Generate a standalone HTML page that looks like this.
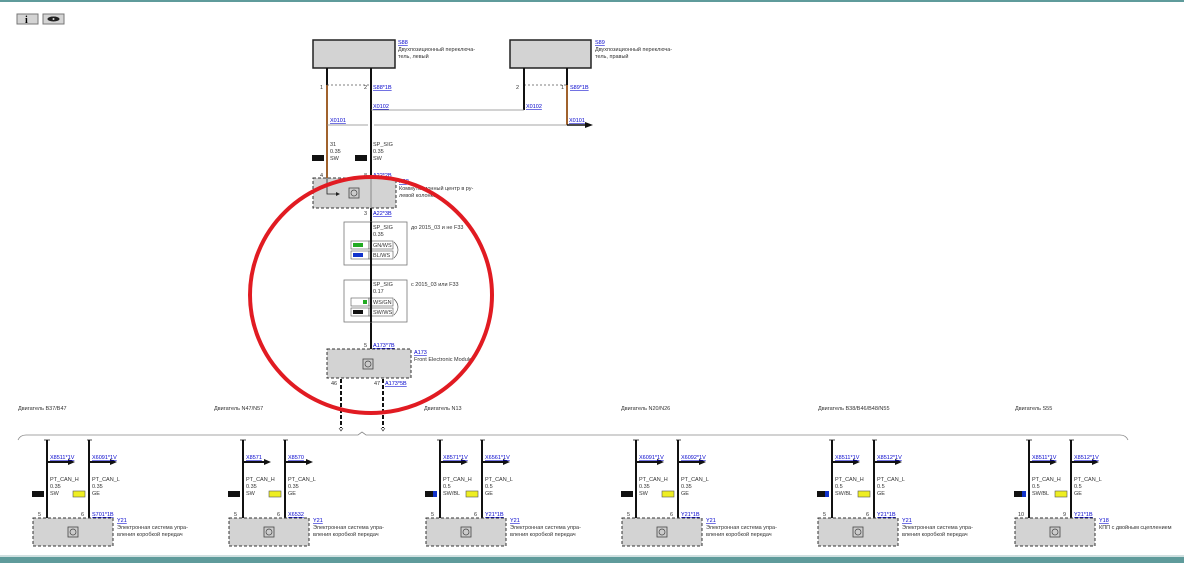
<!DOCTYPE html>
<html><head><meta charset="utf-8"><style>
html,body{margin:0;padding:0;background:#fff;}
svg{display:block;font-family:"Liberation Sans",sans-serif;}
.t{font-size:5.5px;fill:#333;}
.l{font-size:5.5px;fill:#0000cc;text-decoration:underline;}
</style></head><body>
<svg width="1184" height="563" viewBox="0 0 1184 563" xmlns="http://www.w3.org/2000/svg">
<rect x="0" y="0" width="1184" height="2" fill="#5f9b9b"/>
<rect x="0" y="557" width="1184" height="6" fill="#5f9b9b"/>
<rect x="0" y="555" width="1184" height="2" fill="#cfe0e0"/>
<!-- buttons -->
<rect x="17" y="14" width="21" height="10" fill="#d4d4d4" stroke="#777"/>
<text x="25" y="23" font-size="10" font-weight="bold" font-family="Liberation Serif">i</text>
<rect x="43" y="14" width="21" height="10" fill="#d4d4d4" stroke="#777"/>
<ellipse cx="53.5" cy="19" rx="6" ry="2.5" fill="#222"/><circle cx="53.5" cy="19" r="1" fill="#ddd"/>

<!-- top modules -->
<rect x="313" y="40" width="82" height="28" fill="#d3d3d3" stroke="#222" stroke-width="1.5"/>
<text class="l" x="398" y="44">S88</text>
<text class="t" x="398" y="51">Двухпозиционный переключа-</text>
<text class="t" x="398" y="58">тель, левый</text>
<rect x="510" y="40" width="81" height="28" fill="#d3d3d3" stroke="#222" stroke-width="1.5"/>
<text class="l" x="595" y="44">S89</text>
<text class="t" x="595" y="51">Двухпозиционный переключа-</text>
<text class="t" x="595" y="58">тель, правый</text>

<line x1="327" y1="68" x2="327" y2="85" stroke="#111" stroke-width="2"/>
<line x1="327" y1="85" x2="327" y2="178" stroke="#a0622d" stroke-width="2"/>
<line x1="371" y1="68" x2="371" y2="349" stroke="#111" stroke-width="2"/>
<line x1="327" y1="85" x2="371" y2="85" stroke="#555" stroke-width="0.7" stroke-dasharray="2,2"/>
<line x1="524" y1="85" x2="567" y2="85" stroke="#555" stroke-width="0.7" stroke-dasharray="2,2"/>
<line x1="524" y1="68" x2="524" y2="110" stroke="#111" stroke-width="2"/>
<line x1="567" y1="68" x2="567" y2="85" stroke="#111" stroke-width="2"/>
<line x1="567" y1="85" x2="567" y2="125" stroke="#a0622d" stroke-width="2"/>
<line x1="371" y1="110" x2="524" y2="110" stroke="#888" stroke-width="0.8"/>
<line x1="327" y1="125" x2="368" y2="125" stroke="#888" stroke-width="0.8"/>
<line x1="374" y1="125" x2="567" y2="125" stroke="#888" stroke-width="0.8"/>
<line x1="567" y1="125" x2="586" y2="125" stroke="#111" stroke-width="1.5"/>
<polygon points="585,122 593,125 585,128" fill="#111"/>
<text class="t" x="320" y="89">1</text><text class="t" x="364" y="89">2</text>
<text class="l" x="373" y="89">S88*1B</text>
<text class="t" x="516" y="89">2</text><text class="t" x="561" y="89">1</text>
<text class="l" x="570" y="89">S89*1B</text>
<text class="l" x="373" y="108">X0102</text><text class="l" x="526" y="108">X0102</text>
<text class="l" x="330" y="122">X0101</text><text class="l" x="569" y="122">X0101</text>
<text class="t" x="330" y="146">31</text><text class="t" x="330" y="153">0.35</text><text class="t" x="330" y="160">SW</text>
<text class="t" x="373" y="146">SP_SIG</text><text class="t" x="373" y="153">0.35</text><text class="t" x="373" y="160">SW</text>
<rect x="312" y="155" width="12" height="6" fill="#111"/>
<rect x="355" y="155" width="12" height="6" fill="#111"/>

<!-- A22 -->
<rect x="313" y="178" width="83" height="30" fill="#d3d3d3" stroke="#333" stroke-dasharray="3,2"/>
<line x1="371" y1="178" x2="371" y2="208" stroke="#888" stroke-width="1"/>
<rect x="349" y="188" width="10" height="10" fill="#ccc" stroke="#444" stroke-width="0.8"/>
<circle cx="354" cy="193" r="3" fill="none" stroke="#444" stroke-width="0.7"/>
<path d="M327 178 V194 H337" stroke="#222" fill="none" stroke-width="0.8"/><polygon points="336,192 340,194 336,196" fill="#222"/>
<text class="t" x="320" y="177">4</text><text class="t" x="364" y="177">8</text>
<text class="l" x="373" y="177">A22*2B</text>
<text class="l" x="399" y="183">A22</text>
<text class="t" x="399" y="190">Коммутационный центр в ру-</text>
<text class="t" x="399" y="197">левой колонке</text>
<text class="t" x="364" y="215">3</text><text class="l" x="373" y="215">A22*3B</text>

<!-- variant boxes -->
<rect x="344" y="222" width="63" height="43" fill="#fff" stroke="#777" stroke-width="0.8"/>
<text class="t" x="373" y="229">SP_SIG</text><text class="t" x="373" y="236">0.35</text>
<rect x="351" y="241" width="18" height="8" fill="#fff" stroke="#555" stroke-width="0.6"/>
<rect x="353" y="243" width="10" height="4" fill="#22aa22"/>
<rect x="351" y="251" width="18" height="8" fill="#fff" stroke="#555" stroke-width="0.6"/>
<rect x="353" y="253" width="10" height="4" fill="#1133cc"/>
<rect x="369" y="241" width="24" height="8" fill="#fff" stroke="#555" stroke-width="0.6"/>
<rect x="369" y="251" width="24" height="8" fill="#fff" stroke="#555" stroke-width="0.6"/>
<text class="t" x="373" y="247">GN/WS</text><text class="t" x="373" y="257">BL/WS</text>
<path d="M394 242 Q402 250 394 258" stroke="#444" fill="none" stroke-width="0.6"/>
<text class="t" x="411" y="229">до 2015_03 и не F33</text>

<rect x="344" y="280" width="63" height="42" fill="#fff" stroke="#777" stroke-width="0.8"/>
<text class="t" x="373" y="286">SP_SIG</text><text class="t" x="373" y="293">0.17</text>
<rect x="351" y="298" width="18" height="8" fill="#fff" stroke="#555" stroke-width="0.6"/>
<rect x="363" y="300" width="4" height="4" fill="#22aa22"/>
<rect x="351" y="308" width="18" height="8" fill="#fff" stroke="#555" stroke-width="0.6"/>
<rect x="353" y="310" width="10" height="4" fill="#111"/>
<rect x="369" y="298" width="24" height="8" fill="#fff" stroke="#555" stroke-width="0.6"/>
<rect x="369" y="308" width="24" height="8" fill="#fff" stroke="#555" stroke-width="0.6"/>
<text class="t" x="373" y="304">WS/GN</text><text class="t" x="373" y="314">SW/WS</text>
<path d="M394 299 Q402 307 394 315" stroke="#444" fill="none" stroke-width="0.6"/>
<text class="t" x="411" y="286">с 2015_03 или F33</text>
<line x1="371" y1="222" x2="371" y2="322" stroke="#111" stroke-width="2"/>

<!-- A173 -->
<text class="t" x="364" y="347">5</text><text class="l" x="373" y="347">A173*7B</text>
<rect x="327" y="349" width="84" height="29" fill="#d3d3d3" stroke="#333" stroke-dasharray="3,2"/>
<rect x="363" y="359" width="10" height="10" fill="#ccc" stroke="#444" stroke-width="0.8"/>
<circle cx="368" cy="364" r="3" fill="none" stroke="#444" stroke-width="0.7"/>
<text class="l" x="414" y="354">A173</text>
<text class="t" x="414" y="361">Front Electronic Module</text>
<text class="t" x="331" y="385">46</text><text class="t" x="374" y="385">47</text>
<text class="l" x="385" y="385">A173*5B</text>
<line x1="341" y1="379" x2="341" y2="428" stroke="#111" stroke-width="2" stroke-dasharray="4,2"/>
<line x1="383" y1="379" x2="383" y2="428" stroke="#111" stroke-width="2" stroke-dasharray="4,2"/>
<path d="M339 428 L341 431 L343 428 M381 428 L383 431 L385 428" stroke="#111" fill="none" stroke-width="0.6"/>

<!-- red circle -->
<ellipse cx="371" cy="295" rx="121" ry="118" fill="none" stroke="#e11b22" stroke-width="4"/>

<!-- brace -->
<path d="M18 440 Q20 435 26 435 H358 L362 432 L366 435 H1120 Q1126 435 1128 440" stroke="#888" fill="none" stroke-width="0.8"/>

<!-- engine labels -->
<text class="t" x="18" y="410">Двигатель B37/B47</text>
<text class="t" x="214" y="410">Двигатель N47/N57</text>
<text class="t" x="424" y="410">Двигатель N13</text>
<text class="t" x="621" y="410">Двигатель N20/N26</text>
<text class="t" x="818" y="410">Двигатель B38/B46/B48/N55</text>
<text class="t" x="1015" y="410">Двигатель S55</text>

<defs>
<g id="mod">
<line x1="14" y1="440" x2="14" y2="518" stroke="#111" stroke-width="2"/>
<line x1="56" y1="440" x2="56" y2="518" stroke="#111" stroke-width="2"/>
<path d="M11 440 H17 M54 440 H59" stroke="#111" stroke-width="0.8"/>
<line x1="14" y1="462" x2="36" y2="462" stroke="#111" stroke-width="2"/>
<polygon points="35,459 42,462 35,465" fill="#111"/>
<line x1="56" y1="462" x2="78" y2="462" stroke="#111" stroke-width="2"/>
<polygon points="77,459 84,462 77,465" fill="#111"/>
<rect x="40" y="491" width="12" height="6" fill="#eeee22" stroke="#555" stroke-width="0.6"/>
<rect x="0" y="518" width="80" height="28" fill="#d3d3d3" stroke="#333" stroke-dasharray="3,2"/>
<rect x="35" y="527" width="10" height="10" fill="#ccc" stroke="#444" stroke-width="0.8"/>
<circle cx="40" cy="532" r="3" fill="none" stroke="#444" stroke-width="0.7"/>
<text class="t" x="17" y="481">PT_CAN_H</text>
<text class="t" x="59" y="481">PT_CAN_L</text>
<text class="t" x="59" y="495">GE</text>
</g>
</defs>

<g transform="translate(33,0)"><use href="#mod"/>
<rect x="-1" y="491" width="12" height="6" fill="#111"/>
<text class="l" x="17" y="459">X8511*1V</text><text class="l" x="59" y="459">X6091*1V</text>
<text class="t" x="17" y="488">0.35</text><text class="t" x="59" y="488">0.35</text><text class="t" x="17" y="495">SW</text>
<text class="t" x="5" y="516">5</text><text class="t" x="48" y="516">6</text><text class="l" x="59" y="516">S701*1B</text>
<text class="l" x="84" y="522">Y21</text><text class="t" x="84" y="529">Электронная система упра-</text><text class="t" x="84" y="536">вления коробкой передач</text></g>

<g transform="translate(229,0)"><use href="#mod"/>
<rect x="-1" y="491" width="12" height="6" fill="#111"/>
<text class="l" x="17" y="459">X8571</text><text class="l" x="59" y="459">X8570</text>
<text class="t" x="17" y="488">0.35</text><text class="t" x="59" y="488">0.35</text><text class="t" x="17" y="495">SW</text>
<text class="t" x="5" y="516">5</text><text class="t" x="48" y="516">6</text><text class="l" x="59" y="516">X6532</text>
<text class="l" x="84" y="522">Y21</text><text class="t" x="84" y="529">Электронная система упра-</text><text class="t" x="84" y="536">вления коробкой передач</text></g>

<g transform="translate(426,0)"><use href="#mod"/>
<rect x="-1" y="491" width="8" height="6" fill="#111"/><rect x="7" y="491" width="4" height="6" fill="#1133cc"/>
<text class="l" x="17" y="459">X8571*1V</text><text class="l" x="59" y="459">X6561*1V</text>
<text class="t" x="17" y="488">0.5</text><text class="t" x="59" y="488">0.5</text><text class="t" x="17" y="495">SW/BL</text>
<text class="t" x="5" y="516">5</text><text class="t" x="48" y="516">6</text><text class="l" x="59" y="516">Y21*1B</text>
<text class="l" x="84" y="522">Y21</text><text class="t" x="84" y="529">Электронная система упра-</text><text class="t" x="84" y="536">вления коробкой передач</text></g>

<g transform="translate(622,0)"><use href="#mod"/>
<rect x="-1" y="491" width="12" height="6" fill="#111"/>
<text class="l" x="17" y="459">X6091*1V</text><text class="l" x="59" y="459">X6092*1V</text>
<text class="t" x="17" y="488">0.35</text><text class="t" x="59" y="488">0.35</text><text class="t" x="17" y="495">SW</text>
<text class="t" x="5" y="516">5</text><text class="t" x="48" y="516">6</text><text class="l" x="59" y="516">Y21*1B</text>
<text class="l" x="84" y="522">Y21</text><text class="t" x="84" y="529">Электронная система упра-</text><text class="t" x="84" y="536">вления коробкой передач</text></g>

<g transform="translate(818,0)"><use href="#mod"/>
<rect x="-1" y="491" width="8" height="6" fill="#111"/><rect x="7" y="491" width="4" height="6" fill="#1133cc"/>
<text class="l" x="17" y="459">X8511*1V</text><text class="l" x="59" y="459">X8512*1V</text>
<text class="t" x="17" y="488">0.5</text><text class="t" x="59" y="488">0.5</text><text class="t" x="17" y="495">SW/BL</text>
<text class="t" x="5" y="516">5</text><text class="t" x="48" y="516">6</text><text class="l" x="59" y="516">Y21*1B</text>
<text class="l" x="84" y="522">Y21</text><text class="t" x="84" y="529">Электронная система упра-</text><text class="t" x="84" y="536">вления коробкой передач</text></g>

<g transform="translate(1015,0)"><use href="#mod"/>
<rect x="-1" y="491" width="8" height="6" fill="#111"/><rect x="7" y="491" width="4" height="6" fill="#1133cc"/>
<text class="l" x="17" y="459">X8511*1V</text><text class="l" x="59" y="459">X8512*1V</text>
<text class="t" x="17" y="488">0.5</text><text class="t" x="59" y="488">0.5</text><text class="t" x="17" y="495">SW/BL</text>
<text class="t" x="3" y="516">10</text><text class="t" x="48" y="516">9</text><text class="l" x="59" y="516">Y21*1B</text>
<text class="l" x="84" y="522">Y18</text><text class="t" x="84" y="529">КПП с двойным сцеплением</text></g>
</svg>
</body></html>
